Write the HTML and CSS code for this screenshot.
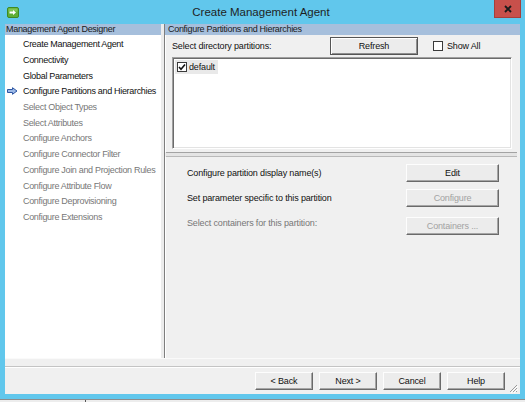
FILE: index.html
```html
<!DOCTYPE html>
<html>
<head>
<meta charset="utf-8">
<link rel="stylesheet" href="styles.css">
</head>
<body>
<div class="window">
  <div class="titlebar">
    <div class="tb-left">
      <svg class="app-icon" width="12" height="11" viewBox="0 0 12 11">
        <rect x="0.5" y="0.5" width="11" height="10" rx="1.5" fill="#5fae36" stroke="#3f8a22"/>
        <rect x="1.5" y="1.5" width="9" height="3" fill="#8fd063" opacity="0.7"/>
        <path d="M2.5 4.5 H6 V3 L9 5.5 L6 8 V6.5 H2.5 Z" fill="#fff"/>
      </svg>
    </div>
    <div class="title">Create Management Agent</div>
    <div class="tb-right">
      <div class="close">
        <svg width="8" height="8" viewBox="0 0 8 8"><path d="M1 1 L7 7 M7 1 L1 7" stroke="#1a1a1a" stroke-width="1.9"/></svg>
      </div>
    </div>
  </div>

  <div class="client">
    <div class="panes">
      <div class="left">
        <div class="pane-header">Management Agent Designer</div>
        <ul class="steps">
          <li class="step"><span class="marker"></span>Create Management Agent</li>
          <li class="step"><span class="marker"></span>Connectivity</li>
          <li class="step"><span class="marker"></span>Global Parameters</li>
          <li class="step current"><span class="marker">
            <svg width="11" height="8" viewBox="0 0 11 8"><path d="M0.5 2.5 H5.5 V0.7 L10 4 L5.5 7.3 V5.5 H0.5 Z" fill="#9bb8e6" stroke="#2d55a3" stroke-width="1"/></svg>
          </span>Configure Partitions and Hierarchies</li>
          <li class="step off"><span class="marker"></span>Select Object Types</li>
          <li class="step off"><span class="marker"></span>Select Attributes</li>
          <li class="step off"><span class="marker"></span>Configure Anchors</li>
          <li class="step off"><span class="marker"></span>Configure Connector Filter</li>
          <li class="step off"><span class="marker"></span>Configure Join and Projection Rules</li>
          <li class="step off"><span class="marker"></span>Configure Attribute Flow</li>
          <li class="step off"><span class="marker"></span>Configure Deprovisioning</li>
          <li class="step off"><span class="marker"></span>Configure Extensions</li>
        </ul>
      </div>
      <div class="vsplit"></div>
      <div class="right">
        <div class="pane-header right-header">Configure Partitions and Hierarchies</div>
        <div class="top-sec">
          <div class="row1">
            <span class="row1-label">Select directory partitions:</span>
            <div class="btn default refresh">Refresh</div>
            <label class="showall"><span class="cb"></span>Show All</label>
          </div>
          <div class="listbox">
            <div class="item">
              <span class="cb checked">
                <svg width="8" height="8" viewBox="0 0 8 8"><path d="M1 4 L3 6.2 L7 1.5" fill="none" stroke="#111" stroke-width="1.6"/></svg>
              </span>
              <span class="item-label">default</span>
            </div>
          </div>
        </div>
        <div class="hsplit"></div>
        <div class="bottom-sec">
          <div class="opt r1">
            <span class="opt-label">Configure partition display name(s)</span>
            <div class="btn opt-btn">Edit</div>
          </div>
          <div class="opt r2">
            <span class="opt-label">Set parameter specific to this partition</span>
            <div class="btn opt-btn disabled">Configure</div>
          </div>
          <div class="opt r3">
            <span class="opt-label grey">Select containers for this partition:</span>
            <div class="btn opt-btn disabled">Containers ...</div>
          </div>
        </div>
      </div>
    </div>
    <div class="footer-sep"></div>
    <div class="footer">
      <div class="btn nav">&lt; Back</div>
      <div class="btn nav">Next &gt;</div>
      <div class="btn nav">Cancel</div>
      <div class="btn nav">Help</div>
      <svg class="grip" width="10" height="10" viewBox="0 0 10 10">
        <path d="M9 2 L2 9 M9 5 L5 9 M9 8 L8 9" stroke="#9a9a9a" stroke-width="1"/>
        <path d="M10 3 L3 10 M10 6 L6 10" stroke="#fff" stroke-width="1"/>
      </svg>
    </div>
  </div>
  <div class="bottom-strip"><span class="tick"></span></div>
</div>
</body>
</html>
```

FILE: styles.css
```css
* { box-sizing: border-box; }
html, body { margin: 0; padding: 0; }
body {
  width: 525px;
  height: 402px;
  overflow: hidden;
  font-family: "Liberation Sans", Arial, sans-serif;
  font-size: 9px;
  letter-spacing: -0.15px;
  color: #111;
}
.window {
  width: 525px;
  height: 402px;
  background: #61c7ec;
  display: flex;
  flex-direction: column;
}
.titlebar {
  height: 24px;
  flex: none;
  display: grid;
  grid-template-columns: 1fr auto 1fr;
  align-items: start;
}
.tb-left { padding: 7px 0 0 7px; display: flex; }
.app-icon { display: block; }
.title {
  font-size: 11.5px;
  letter-spacing: 0;
  line-height: 24px;
  color: #1f1f1f;
  margin-left: -3px;
}
.tb-right { display: flex; justify-content: flex-end; padding-right: 4px; }
.close {
  width: 27px;
  height: 18px;
  background: #c8504b;
  border: 1px solid #a63f3b;
  border-top: none;
  display: flex;
  align-items: center;
  justify-content: center;
}
.close svg { display: block; }

.client {
  margin: 0 5px;
  height: 370px;
  flex: none;
  background: #f0f0f0;
  display: flex;
  flex-direction: column;
}
.panes {
  height: 334px;
  flex: none;
  display: flex;
}
.pane-header {
  height: 11px;
  line-height: 11px;
  background: #a6bfdc;
  padding-left: 1px;
  white-space: nowrap;
  color: #1b1b1b;
  letter-spacing: -0.3px;
}
.left {
  width: 156px;
  flex: none;
  display: flex;
  flex-direction: column;
}
.steps {
  list-style: none;
  margin: 0;
  padding: 1.5px 0 0 0;
  flex: 1;
  background: #fff;
}
.step {
  height: 15.7px;
  display: flex;
  align-items: center;
  padding-left: 2px;
  white-space: nowrap;
  color: #111;
  letter-spacing: -0.32px;
}
.step.off { color: #777; }
.marker {
  width: 16px;
  flex: none;
  display: flex;
  align-items: center;
}
.marker svg { display: block; }
.vsplit {
  width: 3px;
  flex: none;
  background: #ececec;
}
.right {
  flex: 1;
  display: flex;
  flex-direction: column;
  border-left: 1px solid #7e7e7e;
}
.right-header { padding-left: 3px; }
.top-sec {
  padding: 0 8px 3px 7px;
  box-shadow: inset 1px 0 0 #fff;
}
.row1 {
  height: 22px;
  display: flex;
  align-items: center;
}
.row1-label { width: 158px; flex: none; white-space: nowrap; }
.btn {
  display: flex;
  align-items: center;
  justify-content: center;
  height: 18px;
  background: #ececec;
  border: 1px solid;
  border-color: #fdfdfd #6a6a6a #6a6a6a #fdfdfd;
  box-shadow: inset -1px -1px 0 #a6a6a6;
  color: #111;
  white-space: nowrap;
}
.btn.default {
  border-color: #555 #555 #555 #555;
  box-shadow: inset 1px 1px 0 #fff, inset -1px -1px 0 #8f8f8f;
}
.refresh { width: 88px; flex: none; }
.showall {
  margin-left: 15px;
  display: flex;
  align-items: center;
  gap: 4px;
}
.cb {
  width: 10px;
  height: 10px;
  border: 1px solid #3a3a3a;
  background: #fff;
  display: flex;
  align-items: center;
  justify-content: center;
  flex: none;
}
.cb svg { display: block; }
.listbox {
  height: 92px;
  background: #fff;
  border: 1px solid;
  border-color: #a0a0a0 #fff #fff #a0a0a0;
  box-shadow: inset 1px 1px 0 #6b6b6b, inset -1px -1px 0 #e3e3e3;
  padding: 2px 0 0 2px;
}
.item {
  display: inline-flex;
  align-items: center;
  height: 14px;
  background: #e9e9e9;
  padding: 0 3px 0 2px;
  gap: 2px;
}
.hsplit {
  height: 5px;
  margin: 0 3px 0 1px;
  background: #e4e4e4;
  border-top: 1px solid #a3a3a3;
  border-bottom: 1px solid #b9b9b9;
}
.bottom-sec {
  flex: 1;
  padding: 7px 21px 0 22px;
  box-shadow: inset 1px 0 0 #fff;
}
.opt {
  display: flex;
  justify-content: space-between;
  align-items: center;
  height: 18px;
}
.opt.r2 { margin-top: 7px; }
.opt.r3 { margin-top: 10px; align-items: flex-start; }
.opt.r3 .opt-label { line-height: 12px; }
.opt-label { white-space: nowrap; }
.grey { color: #777; }
.opt-btn { width: 93px; }
.opt-btn.disabled { color: #a2a2a2; }

.footer-sep {
  height: 9px;
  flex: none;
  border-top: 1px solid #fafafa;
  border-bottom: 1px solid #c4c4c4;
  box-shadow: 0 1px 0 #fff;
}
.footer {
  flex: 1;
  display: flex;
  align-items: flex-start;
  justify-content: flex-end;
  gap: 6px;
  padding: 5px 2px 0 0;
}
.nav { width: 58px; }
.grip { align-self: flex-end; margin-left: -3px; margin-bottom: 1px; display: block; }
.bottom-strip {
  flex: 1;
  margin-top: 5px;
  background: #ededed;
  border-top: 1px solid #8c8c8c;
  display: flex;
}
.tick { width: 1px; height: 2px; background: #555; margin-left: 85px; }
```
